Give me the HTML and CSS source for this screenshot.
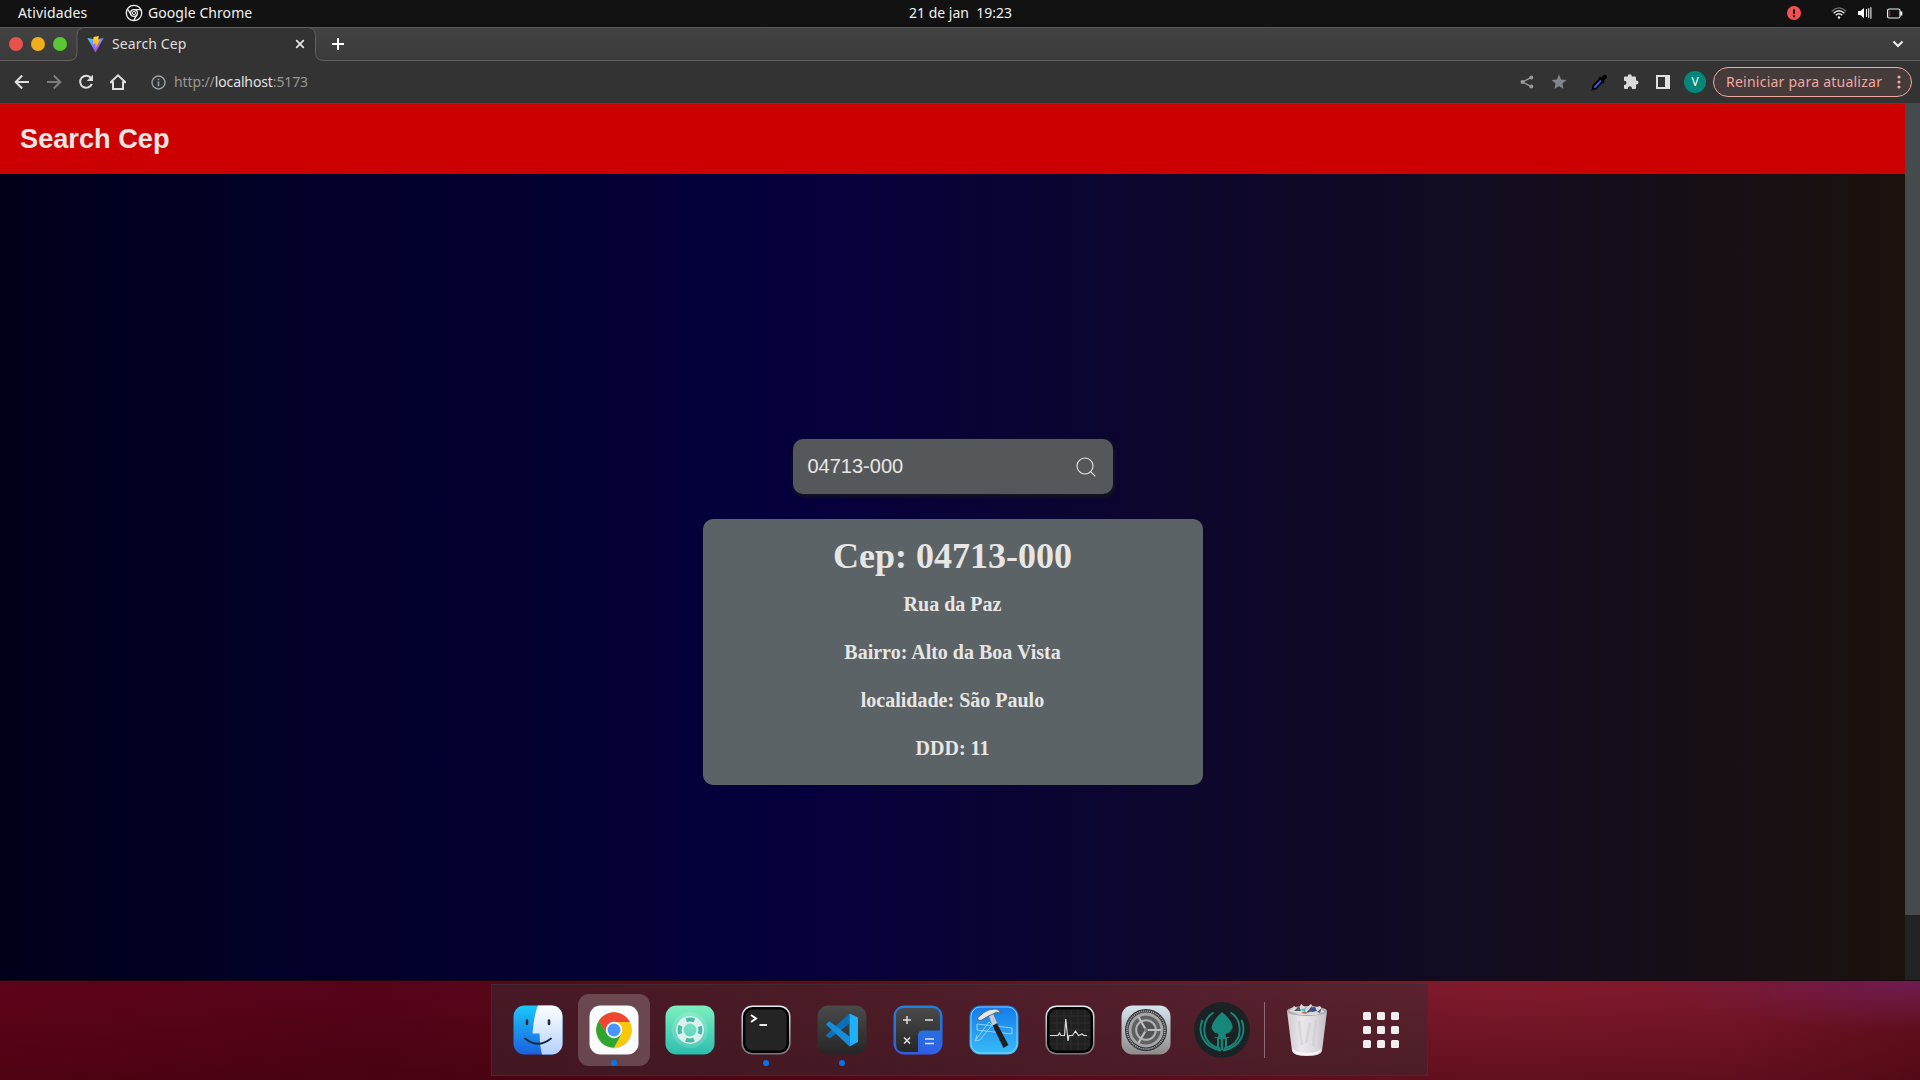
FILE: index.html
```
<!DOCTYPE html>
<html lang="pt-BR">
<head>
<meta charset="utf-8">
<title>Search Cep</title>
<link rel="stylesheet" href="styles.css">
</head>
<body>
<div class="topbar">
  <span class="topbar-activities">Atividades</span>
  <span class="topbar-app">
    <svg width="18" height="18" viewBox="0 0 18 18" fill="none" stroke="#f0f0f0" stroke-width="1.3"><circle cx="9" cy="9" r="7.7"/><circle cx="9" cy="9" r="3.4"/><circle cx="9" cy="9" r="1.6" stroke-width="1"/><path d="M9 5.6H15.8M6.1 10.7L2.5 5M12 10.6L8.6 16.6"/></svg>
    <span class="app-name">Google Chrome</span>
  </span>
  <span class="topbar-clock">21 de jan&nbsp; 19:23</span>
  <span class="topbar-status">
    <svg class="alert" width="14" height="14" viewBox="0 0 14 14"><circle cx="7" cy="7" r="7" fill="#f35151"/><path d="M6 3h2v5H6zM6 9.2h2v2H6z" fill="#121212"/></svg>
    <svg class="wifi" width="16" height="12" viewBox="0 0 16 12" fill="none" stroke="#eee" stroke-width="1.3"><path d="M.8 4.2Q8-2.4 15.2 4.2" stroke="#777"/><path d="M2.6 6.2Q8 1.3 13.4 6.2M4.7 8.3Q8 5.3 11.3 8.3"/><circle cx="8" cy="10.5" r="1.2" fill="#eee" stroke="none"/></svg>
    <svg class="volume" width="14" height="14" viewBox="0 0 14 14"><path d="M0 5h2.500L6 2v10L2.500 9H0z" fill="#fff"/><path d="M8.500 3v8M10.700 2.200v9.600M12.900 1.200v11.600" stroke="#eee" stroke-width="1.100"/></svg>
    <svg class="battery" width="16" height="11" viewBox="0 0 16 11" fill="none"><rect x=".6" y="1" width="12.4" height="9" rx="1.5" stroke="#eee" stroke-width="1.2"/><path d="M14.300 3.500v4" stroke="#fff" stroke-width="2"/><path d="M2.800 2.500v6" stroke="#b3282d"/></svg>
  </span>
</div>

<div class="tabstrip">
  <div class="window-buttons"><i class="close"></i><i class="minimize"></i><i class="maximize"></i></div>
  <div class="tab">
    <svg class="tab-shape" width="256" height="34" viewBox="0 0 256 34"><path d="M0 34V33.500Q8 33.500 8 25.500V8.500Q8 .5 16 .5H238.500Q246.500 .5 246.500 8.500V25.500Q246.500 33.500 254.500 33.500V34z" fill="#333"/><path d="M0 33.500Q8 33.500 8 25.500V8.500Q8 .5 16 .5H238.500Q246.500 .5 246.500 8.500V25.500Q246.500 33.500 254.500 33.500" fill="none" stroke="#616161"/></svg>
    <svg class="favicon" width="17" height="17" viewBox="0 0 17 17"><defs><linearGradient id="vite-v" x1="0" y1="0" x2=".6" y2="1"><stop offset="0" stop-color="#41d1ff"/><stop offset="1" stop-color="#bd34fe"/></linearGradient><linearGradient id="vite-b" x1="0" y1="0" x2="0" y2="1"><stop offset="0" stop-color="#ffd928"/><stop offset="1" stop-color="#ffa800"/></linearGradient></defs><path d="M.3 2L8.500 3.400 16.700 2 8.500 16.500z" fill="url(#vite-v)"/><path d="M6.500 1L11.800 0 11.200 4.300 13 4.100 8.500 12 8.900 7.600 6 8z" fill="url(#vite-b)"/></svg>
    <span class="tab-title">Search Cep</span>
    <svg class="tab-close" width="10" height="10" viewBox="0 0 10 10" stroke="#e8e8e8" stroke-width="1.7"><path d="M1.200 1.200L8.800 8.800M8.800 1.200L1.200 8.800"/></svg>
  </div>
  <svg class="new-tab" width="12" height="12" viewBox="0 0 12 12" stroke="#fff" stroke-width="2"><path d="M6 0V12M0 6H12"/></svg>
  <svg class="tab-search" width="12" height="8" viewBox="0 0 12 8" fill="none" stroke="#eee" stroke-width="2"><path d="M1.500 1.500L6 6L10.500 1.500"/></svg>
</div>

<div class="toolbar">
  <div class="nav">
    <svg width="16" height="16" viewBox="0 0 16 16" fill="none" stroke="#dedede" stroke-width="2"><path d="M15 8H2.500M8.200 1.500L1.700 8L8.200 14.500"/></svg>
    <svg width="16" height="16" viewBox="0 0 16 16" fill="none" stroke="#7c7c7c" stroke-width="2"><path d="M1 8H13.500M7.800 1.500L14.300 8L7.800 14.500"/></svg>
    <svg width="16" height="16" viewBox="0 0 16 16" fill="none" stroke="#dedede" stroke-width="2"><path d="M13 4.200A6 6 0 1 0 13.800 9.800"/><path d="M15 .7V7H8.700z" fill="#dedede" stroke="none"/></svg>
    <svg width="16" height="16" viewBox="0 0 16 16" fill="none" stroke="#dedede" stroke-width="2"><path d="M.6 8.200H3V15H13V8.200H15.400L8 1.300z"/></svg>
  </div>
  <div class="address">
    <svg width="15" height="15" viewBox="0 0 15 15" fill="none" stroke="#9aa0a6" stroke-width="1.400"><circle cx="7.500" cy="7.500" r="6.500"/><path d="M7.500 6.600V11.200M7.500 3.800V5.300" stroke-width="1.600"/></svg>
    <span class="url">http://<b>localhost</b>:5173</span>
  </div>
  <div class="actions">
    <svg class="share" width="14" height="14" viewBox="0 0 14 14"><path d="M11.300 2.300L2.500 7L11.300 11.700" fill="none" stroke="#989898" stroke-width="1.400"/><g fill="#989898"><circle cx="11.300" cy="2.500" r="2"/><circle cx="2.500" cy="7" r="2"/><circle cx="11.300" cy="11.500" r="2"/></g></svg>
    <svg class="star" width="16" height="16" viewBox="0 0 16 16"><path d="M8 .5L10.100 5.500L15.500 6L11.400 9.600L12.600 15L8 12.100L3.400 15L4.600 9.600L.5 6L5.900 5.500z" fill="#80868b"/></svg>
    <svg class="dropper" width="16" height="17" viewBox="0 0 16 17"><path d="M1.500 15.500L2.500 11.500L9.500 4.500L12 7L5 14.500z" fill="#3f51c6" stroke="#000" stroke-width="1.700"/><path d="M7.500 4L9 2.600L10.300 3.800L12.500 1.300Q14 0 15.300 1.300T15.200 4.400L12.800 6.500L13.900 7.800L12.400 9.200z" fill="#000"/></svg>
    <svg class="puzzle" width="16" height="16" viewBox="0 0 16 16"><path d="M1 3.500Q1 2.500 2 2.500H4.800Q4.500 .3 6.800 .3T8.800 2.500H12Q13 2.500 13 3.500V6.500Q15.500 6.200 15.500 8.500T13 10.500V14Q13 15 12 15H9Q9 12.300 6.900 12.300T4.800 15H2Q1 15 1 14V11Q3.600 11 3.600 8.800T1 6.700z" fill="#dadada"/></svg>
    <svg class="panel" width="14" height="14" viewBox="0 0 14 14"><path fill="#e0e0e0" fill-rule="evenodd" d="M0 0H14V14H0zM2 2V12H9V2z"/></svg>
    <span class="avatar">V</span>
    <span class="restart"><span class="restart-label">Reiniciar para atualizar</span><svg width="4" height="14" viewBox="0 0 4 14" fill="#f0a89f"><circle cx="2" cy="2" r="1.600"/><circle cx="2" cy="7" r="1.600"/><circle cx="2" cy="12" r="1.600"/></svg></span>
  </div>
</div>

<div class="viewport">
  <div class="page">
    <header class="header"><h1>Search Cep</h1></header>
    <main class="main">
      <div class="search">
        <span>04713-000</span>
        <svg width="20" height="20" viewBox="0 0 20 20" fill="none" stroke="#e8e6e3" stroke-width="1.100"><circle cx="9" cy="9" r="8"/><path d="M14.300 14.300L19.300 19.300"/></svg>
      </div>
      <section class="result">
        <h2>Cep: 04713-000</h2>
        <p>Rua da Paz</p>
        <p>Bairro: Alto da Boa Vista</p>
        <p>localidade: São Paulo</p>
        <p>DDD: 11</p>
      </section>
    </main>
  </div>
  <div class="scrollbar"><div class="thumb"></div></div>
</div>

<div class="desktop">
  <div class="dock">
    <div class="dock-item"><svg width="50" height="50" viewBox="0 0 50 50"><defs><linearGradient id="fb" x2="0" y2="1"><stop stop-color="#1ac8fa"/><stop offset="1" stop-color="#1c5fdf"/></linearGradient><linearGradient id="fw" x2="0" y2="1"><stop stop-color="#fff"/><stop offset="1" stop-color="#b4d2fc"/></linearGradient><clipPath id="sq"><rect x=".5" y=".5" width="49" height="49" rx="11"/></clipPath></defs><g clip-path="url(#sq)"><path d="M0 0H50V50H0z" fill="url(#fb)"/><path d="M25 0Q20.500 12 19.500 28.500H26.500Q26.500 40 29 50H50V0z" fill="url(#fw)"/></g><path d="M14 15.500V19M36 15.500V19" stroke="#222c3c" stroke-width="2.600" stroke-linecap="round"/><path d="M12 33.500Q25 44 38 33.500" fill="none" stroke="#142a40" stroke-width="1.800" stroke-linecap="round"/></svg></div>
    <div class="dock-item focused running"><svg width="50" height="50" viewBox="0 0 50 50"><rect x=".5" y=".5" width="49" height="49" rx="11" fill="#fbfcfe"/><circle cx="25" cy="25.500" r="18" fill="#d5dae6"/><circle cx="25" cy="25" r="17.700" fill="#f9c80a"/><path d="M9.700 16.100A17.700 17.700 0 0 1 40.300 16.100L40.800 17H25L18 29z" fill="#f04533"/><path d="M9.700 16.100A17.700 17.700 0 0 0 25 42.700L32 29.500L25 33L18 29z" fill="#2fa531"/><circle cx="25" cy="25" r="8.200" fill="#fff"/><circle cx="25" cy="25" r="6.500" fill="#4696fb"/></svg></div>
    <div class="dock-item"><svg width="50" height="50" viewBox="0 0 50 50"><defs><linearGradient id="hg" x2="0" y2="1"><stop stop-color="#7df0bf"/><stop offset="1" stop-color="#2cbdb0"/></linearGradient></defs><rect x=".5" y=".5" width="49" height="49" rx="11" fill="url(#hg)"/><circle cx="25" cy="25" r="18" fill="#fff" opacity=".14"/><circle cx="25" cy="25" r="10.200" fill="none" stroke="#dcefed" stroke-width="7.500"/><circle cx="25" cy="25" r="10.400" fill="none" stroke="#43b9a7" stroke-width="4" stroke-dasharray="8.200 8.136" stroke-dashoffset="4.100"/></svg></div>
    <div class="dock-item running"><svg width="50" height="50" viewBox="0 0 50 50"><defs><linearGradient id="mt" x2="0" y2="1"><stop stop-color="#e2f0f5"/><stop offset="1" stop-color="#777476"/></linearGradient></defs><rect x=".5" y=".5" width="49" height="49" rx="11" fill="url(#mt)"/><rect x="2" y="2" width="46" height="46" rx="9.500" fill="#030303"/><rect x="4.500" y="4.500" width="41" height="41" rx="7" fill="#242424"/><path d="M10 10L15 13.500L10 17" fill="none" stroke="#fff" stroke-width="2"/><path d="M18.500 20H26" stroke="#fff" stroke-width="1.800"/></svg></div>
    <div class="dock-item running"><svg width="50" height="50" viewBox="0 0 50 50"><defs><linearGradient id="dk" x2="0" y2="1"><stop stop-color="#4a4a4a"/><stop offset="1" stop-color="#262626"/></linearGradient></defs><rect x=".5" y=".5" width="49" height="49" rx="11" fill="url(#dk)"/><path d="M9 30L32.500 8.500V18.500L13.500 33Q12 33.500 11 32.500L9 30.500z" fill="#0a70b8"/><path d="M9 19.500L11.500 16.800Q12.500 16.300 13.500 17L32.500 31.500V41.500z" fill="#168cd8"/><path d="M32.500 8.500L41 12.500V37L32.500 41.500z" fill="#20b0f7"/></svg></div>
    <div class="dock-item"><svg width="50" height="50" viewBox="0 0 50 50"><defs><linearGradient id="cb" x2="0" y2="1"><stop stop-color="#1b82dd"/><stop offset="1" stop-color="#315de6"/></linearGradient></defs><rect x=".5" y=".5" width="49" height="49" rx="11" fill="url(#cb)"/><path d="M3 11Q3 3 11 3H39Q47 3 47 11V25.500H30Q25 25.500 25 30.500V47H11Q3 47 3 39z" fill="url(#dk)"/><path d="M14 11V19M10 15H18M32 15H40M11 32.500L17 38.500M17 32.500L11 38.500M32 34H41M32 38.500H41" stroke="#e2e2e2" stroke-width="1.500"/></svg></div>
    <div class="dock-item"><svg width="50" height="50" viewBox="0 0 50 50"><defs><linearGradient id="xb" x2="0" y2="1"><stop stop-color="#1479e9"/><stop offset="1" stop-color="#38bdf8"/></linearGradient></defs><rect x=".5" y=".5" width="49" height="49" rx="11" fill="url(#xb)"/><rect x="2" y="2" width="46" height="46" rx="9.500" fill="none" stroke="#9bdcff" stroke-width=".8"/><path d="M8 19L43 23V29L8 25zM6 36L20 17L23 20L11 35zM22 19L34 35M6 36L8 30" fill="none" stroke="#8ed2ff" stroke-width="1"/><path d="M23.500 20.500L28 18.500L39.500 40L34.500 43z" fill="#211f21"/><path d="M19.500 10L24 8.500L28 18L23.500 20.500z" fill="#c8cace"/><path d="M8.500 13L14 8Q20 3.500 27 4Q31 5 31.500 8Q27 6 24 9L19.500 11L12 15.500L9 15z" fill="#e4e6e8" stroke="#4b5563" stroke-width=".8"/></svg></div>
    <div class="dock-item"><svg width="50" height="50" viewBox="0 0 50 50"><rect x=".5" y=".5" width="49" height="49" rx="11" fill="url(#mt)"/><rect x="2" y="2" width="46" height="46" rx="9.500" fill="#030303"/><rect x="4.500" y="4.500" width="41" height="41" rx="7" fill="#202020"/><path d="M12 5V45M19 5V45M26 5V45M33 5V45M40 5V45M5 11H45M5 18H45M5 25H45M5 32H45M5 39H45" stroke="#303030" stroke-width=".8"/><path d="M5 30.500H13L14.500 28L16 30.500H19.500L20.800 14L23 36L24 30.500H27.500L30.500 26L33.500 30.500L37 29L39 30.500H42" fill="none" stroke="#ddd" stroke-width="1.200"/></svg></div>
    <div class="dock-item"><svg width="50" height="50" viewBox="0 0 50 50"><defs><linearGradient id="sg" x2="0" y2="1"><stop stop-color="#d6e6ed"/><stop offset="1" stop-color="#8e8b8b"/></linearGradient></defs><rect x=".5" y=".5" width="49" height="49" rx="11" fill="url(#sg)"/><circle cx="25" cy="25" r="21" fill="#333537"/><circle cx="25" cy="25" r="19" fill="none" stroke="#a2a4a5" stroke-width="1.600" stroke-dasharray="1.200 .8"/><circle cx="25" cy="25" r="16" fill="#5e6061" stroke="#a4a6a7" stroke-width="3"/><circle cx="25" cy="25" r="9.800" fill="#505253" stroke="#b0b2b3" stroke-width="2"/><path d="M25 25H40M25 25L17.500 12M25 25L17.500 38" stroke="#bcbebf" stroke-width="2.200"/><circle cx="25" cy="25" r="2" fill="#777"/></svg></div>
    <div class="dock-item"><svg width="56" height="56" viewBox="0 0 56 56"><circle cx="28" cy="28" r="28" fill="#1b2224"/><path d="M28 10Q39 19 38.500 26Q36 30 35 31A2.500 2.500 0 1 0 36 35H33V46H31V37H29.300V48H26.700V37H25V46H23V35H20A2.500 2.500 0 1 0 21 31Q18 28 17.500 26Q18 19 28 10z" fill="#17877b"/><g fill="none" stroke="#17877b" stroke-width="1.900"><path d="M19.500 10.500C7 18 8 37 18 43Q21 45 26 46.500"/><path d="M36.500 10.500C49 18 48 37 38 43Q35 45 30 46.500"/><path d="M8.500 18C3 30 9 45 27 48.500"/><path d="M47.500 18C53 30 47 45 29 48.500"/></g></svg></div>
    <div class="separator"></div>
    <div class="dock-item trash"><svg width="42" height="54" viewBox="0 0 42 54"><defs><linearGradient id="tg"><stop stop-color="#cfcbd0"/><stop offset=".35" stop-color="#eae8ec"/><stop offset=".7" stop-color="#dcdadf"/><stop offset="1" stop-color="#c1bdc3"/></linearGradient></defs><path d="M1 8L6 48Q7 53 21 53T36 48L41 8z" fill="url(#tg)"/><ellipse cx="21" cy="8" rx="20" ry="5" fill="#aaa8ab"/><path d="M3 8L8 3L13 6L15 1L20 5L25 1L28 5L34 3L38 9L30 12L14 12z" fill="#d9d9dc"/><path d="M8 8L13 3L15 8zM20 10L28 8L26 3zM31 9L36 5L34 10z" fill="#555960"/><path d="M13 7L20 5L19 8z" fill="#37bde4"/><path d="M24 5L29 4L31 8L26 9z" fill="#394f91"/><path d="M15 10L19 8L21 11z" fill="#c7632d"/><path d="M7 45Q8 50 21 50T35 45L34.500 48Q33 52 21 52T7.500 48z" fill="#fafafa"/><path d="M13 18L16 42M24 20L20 40M30 17L27 43" stroke="#c8c6cb" stroke-width="2.500" opacity=".45"/></svg></div>
    <div class="dock-item apps"><svg width="36" height="36" viewBox="0 0 36 36" fill="#f1efed"><rect width="8" height="8" rx="1.500"/><rect x="14" width="8" height="8" rx="1.500"/><rect x="28" width="8" height="8" rx="1.500"/><rect y="14" width="8" height="8" rx="1.500"/><rect x="14" y="14" width="8" height="8" rx="1.500"/><rect x="28" y="14" width="8" height="8" rx="1.500"/><rect y="28" width="8" height="8" rx="1.500"/><rect x="14" y="28" width="8" height="8" rx="1.500"/><rect x="28" y="28" width="8" height="8" rx="1.500"/></svg></div>
  </div>
</div>
</body>
</html>
```
FILE: styles.css
```
* { box-sizing: border-box; }
html, body { margin: 0; height: 100%; }
body {
  width: 1920px; height: 1080px; overflow: hidden;
  display: flex; flex-direction: column;
  background: #121212;
  font-family: "Noto Sans", "Open Sans", sans-serif;
}
svg { display: block; flex: none; }

/* system bar */
.topbar {
  flex: none; height: 27px; padding: 0 17px 1px 18px;
  display: grid; grid-template-columns: 1fr 6fr 102px 7fr; grid-template-columns: 107px 784px 102px 1fr; align-items: center;
  background: #121212; color: #f0f0f0;
  font-size: 14px; line-height: 26px; white-space: nowrap;
}
.topbar > * { height: 26px; }
.topbar-activities { letter-spacing: .13px; }
.topbar-app { display: flex; align-items: center; gap: 5px; letter-spacing: .07px; }
.topbar-clock { line-height: 25px; }
.topbar-status { display: flex; align-items: center; justify-content: flex-end; }
.wifi { margin-left: 30px; }
.volume { margin-left: 11px; }
.battery { margin-left: 15px; }

/* tab strip */
.tabstrip {
  flex: none; height: 34px; display: flex; align-items: center;
  border-top: 1px solid #565656; border-bottom: 1px solid #616161;
  background: linear-gradient(#434343, #3a3a3a);
}
.window-buttons { display: flex; gap: 8px; padding-left: 9px; width: 77px; }
.window-buttons i { width: 14px; height: 14px; border-radius: 50%; }
.close { background: #e9524a; }
.minimize { background: #f1ae1b; }
.maximize { background: #59c837; }
.tab { position: relative; width: 239px; height: 32px; padding: 0 11px 0 10px; display: flex; align-items: center; }
.tab > * { position: relative; }
.tab > .tab-shape { position: absolute; left: -8px; top: -1px; }
.tab-title { margin-left: 8px; flex: 1; font-size: 14px; line-height: 18px; padding-bottom: 1px; letter-spacing: .12px; color: #dedede; }
.new-tab { margin-left: 16px; }
.tab-search { margin-left: auto; margin-right: 16px; }

/* toolbar */
.toolbar {
  flex: none; height: 43px; padding: 0 8px 0 14px; display: flex; align-items: center;
  background: #333; border-bottom: 1px solid #494949;
}
.nav { display: flex; gap: 16px; }
.address { display: flex; align-items: center; gap: 8px; margin-left: 25px; font-size: 14px; color: #9a9791; }
.address b { font-weight: 400; color: #e2e2e2; }
.url { padding-bottom: 2px; letter-spacing: -.12px; }
.actions { margin-left: auto; display: flex; align-items: center; }
.star { margin-left: 17px; }
.dropper { margin-left: 24px; }
.puzzle { margin-left: 16px; }
.panel { margin-left: 17px; }
.avatar {
  width: 22px; height: 22px; margin-left: 14px; border-radius: 50%;
  background: #00897b; color: #fff; font-size: 12px; line-height: 22px; text-align: center;
}
.restart {
  width: 199px; height: 30px; margin-left: 7px; padding: 0 10px 0 12px;
  display: flex; align-items: center; justify-content: space-between;
  border: 1px solid #f0a89f; border-radius: 15px;
  background: #463b3b; color: #f0a89f; font-size: 14px; letter-spacing: .24px; white-space: nowrap;
}
.restart-label { padding-bottom: 2px; }

/* web page */
.viewport { flex: none; height: 876px; display: flex; }
.page {
  flex: 1; display: flex; flex-direction: column;
  background: linear-gradient(90deg, #00001b, #05003d 42%, #1b120d);
}
.header { height: 70px; padding: 0 20px; display: flex; align-items: center; background: #c00; }
.header h1 { margin: 0; color: #e8e6e3; font: bold 27.200px "Liberation Sans", sans-serif; }
.main { flex: 1; padding-top: 265px; display: flex; flex-direction: column; align-items: center; gap: 25px; }
.search {
  width: 320px; height: 55px; padding: 0 17px 0 15px; border-radius: 10px;
  display: flex; align-items: center; justify-content: space-between;
  background: #54585b; color: #e8e6e3; font: 20px "Liberation Sans", sans-serif;
  box-shadow: 1px 2px 5px #181a1b;
}
.result {
  width: 500px; height: 266px; padding-top: 17px; border-radius: 10px;
  background: #5c6366; color: #e8e6e3; text-align: center;
  font-family: "Liberation Serif", serif; font-weight: bold;
}
.result h2 { margin: 0 0 6px; font-size: 36px; line-height: 40px; }
.result p { margin: 0 0 4px; font-size: 20px; line-height: 44px; }
.scrollbar { width: 15px; background: #1f2324; }
.thumb { height: 811px; background: #454a4d; }

/* desktop and dock */
.desktop {
  flex: none; height: 100px; padding-top: 3px; display: flex; justify-content: center;
  border-top: 1px solid #1a080c;
  background:
    radial-gradient(ellipse 260px 50px at 100% 0, #701c50, transparent),
    linear-gradient(to bottom, transparent 10%, rgba(55, 0, 8, .4)),
    linear-gradient(90deg, #5e0319, #550319 20%, #5c0a1b 38%, #73142a 62%, #7f1a2c 78%, #7c172b 90%, #65101e);
}
.dock {
  width: 937px; height: 92px; padding-left: 8px; display: flex; align-items: center;
  margin-left: -1px;
  background: rgba(57, 42, 48, .52); border: 1px solid rgba(61, 48, 53, .8);
}
.dock-item { position: relative; flex: none; width: 76px; height: 72px; display: flex; align-items: center; justify-content: center; }
.dock-item svg { position: relative; }
.focused::before { content: ""; position: absolute; left: 2px; top: 0; width: 72px; height: 72px; border-radius: 11px; background: rgba(255, 255, 255, .2); }
.running::after { content: ""; position: absolute; left: 35px; top: 66px; width: 6px; height: 6px; border-radius: 50%; background: #0a73e8; }
.separator { width: 1px; height: 56px; margin-left: 4px; background: #906a74; }
.trash { width: 84px; }
.apps { width: 64px; }
```
